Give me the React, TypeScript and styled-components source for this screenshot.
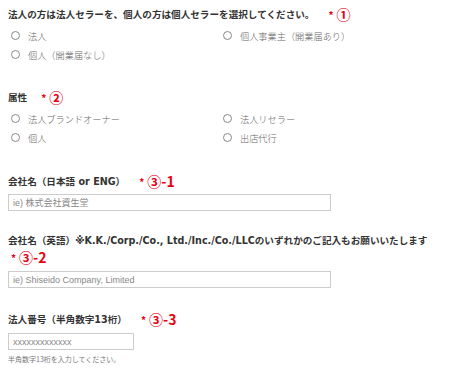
import * as React from 'react';
import styled, { createGlobalStyle } from 'styled-components';

const GlobalStyle = createGlobalStyle`
  html, body {
    margin: 0;
    padding: 0;
    background: #fff;
  }
  body {
    font-family: "DejaVu Sans", "Noto Sans CJK JP", sans-serif;
    color: #333;
  }
`;

type Option = { label: string };

const sellerOptions: Option[] = [
    { label: '法人' },
    { label: '個人事業主（開業届あり）' },
    { label: '個人（開業届なし）' },
];

const attrOptions: Option[] = [
    { label: '法人ブランドオーナー' },
    { label: '法人リセラー' },
    { label: '個人' },
    { label: '出店代行' },
];

const RequiredMark = ({ num, inline = true }: { num: string; inline?: boolean }) => (
    <Mark $inline={inline}>
        <Star>*</Star>
        <Num>{num}</Num>
    </Mark>
);

const RadioGroup = ({ options }: { options: Option[] }) => (
    <RadioGrid>
        {options.map((o) => (
            <RadioItem key={o.label}>
                <Circle />
                <span>{o.label}</span>
            </RadioItem>
        ))}
    </RadioGrid>
);

const App = () => {
    return (
        <Page>
            <GlobalStyle />
            <Section $top={5}>
                <Heading>
                    法人の方は法人セラーを、個人の方は個人セラーを選択してください。
                    <RequiredMark num="①" />
                </Heading>
                <RadioGroup options={sellerOptions} />
            </Section>

            <Section $top={24}>
                <Heading>
                    属性
                    <RequiredMark num="②" />
                </Heading>
                <RadioGroup options={attrOptions} />
            </Section>

            <Section $top={25}>
                <Heading>
                    会社名（日本語 or ENG）
                    <RequiredMark num="③-1" />
                </Heading>
                <TextInput $width={323} $gap={4} placeholder="ie) 株式会社資生堂" />
            </Section>

            <Section $top={20}>
                <Heading>
                    会社名（英語）※K.K./Corp./Co., Ltd./Inc./Co./LLCのいずれかのご記入もお願いいたします
                </Heading>
                <MarkLine>
                    <RequiredMark num="③-2" inline={false} />
                </MarkLine>
                <TextInput $width={323} $gap={6} placeholder="ie) Shiseido Company, Limited" />
            </Section>

            <Section $top={22}>
                <Heading>
                    法人番号（半角数字13桁）
                    <RequiredMark num="③-3" />
                </Heading>
                <TextInput $width={126} $gap={5} placeholder="xxxxxxxxxxxxx" />
                <Help>半角数字13桁を入力してください。</Help>
            </Section>
        </Page>
    );
};

const Page = styled.div`
  padding: 0 8px;
  display: flex;
  flex-direction: column;
`;

const Section = styled.section<{ $top: number }>`
  margin-top: ${(p) => p.$top}px;
  display: flex;
  flex-direction: column;
`;

const Heading = styled.div`
  height: 18px;
  display: flex;
  align-items: center;
  font-size: 9.6px;
  font-weight: bold;
  color: #333;
  white-space: nowrap;
`;

const MarkLine = styled.div`
  height: 16px;
  display: flex;
  align-items: center;
`;

const Mark = styled.span<{ $inline: boolean }>`
  display: inline-flex;
  align-items: center;
  margin-left: ${(p) => (p.$inline ? 14 : 3)}px;
  gap: 3px;
  color: #e60012;
  font-family: "Noto Sans CJK JP", sans-serif;
`;

const Star = styled.span`
  font-size: 10px;
  font-weight: bold;
  line-height: 1;
  position: relative;
  top: 1px;
`;

const Num = styled.span`
  font-size: 14px;
  font-weight: bold;
  line-height: 1;
`;

const RadioGrid = styled.div`
  margin-top: 3px;
  padding-left: 3px;
  display: grid;
  grid-template-columns: 212px 212px;
`;

const RadioItem = styled.label`
  height: 19px;
  display: flex;
  align-items: center;
  gap: 8px;
  font-size: 9.2px;
  color: #666;
  font-family: "Noto Sans CJK JP", sans-serif;
  font-weight: 300;
`;

const Circle = styled.span`
  width: 7px;
  height: 7px;
  border: 1px solid #888;
  border-radius: 50%;
  background: #fff;
  flex: none;
`;

const TextInput = styled.input<{ $width: number; $gap: number }>`
  box-sizing: border-box;
  width: ${(p) => p.$width}px;
  height: 17px;
  margin: ${(p) => p.$gap}px 0 0;
  padding: 0 4px;
  border: 1px solid #ccc;
  background: #fff;
  font-family: "Liberation Sans", "Noto Sans CJK JP", sans-serif;
  font-size: 9px;
  color: #333;
  outline: none;
  &::placeholder {
    color: #888;
  }
`;

const Help = styled.div`
  margin-top: 3px;
  font-size: 7px;
  line-height: 12px;
  color: #777;
  font-family: "Noto Sans CJK JP", sans-serif;
`;

export default App;
